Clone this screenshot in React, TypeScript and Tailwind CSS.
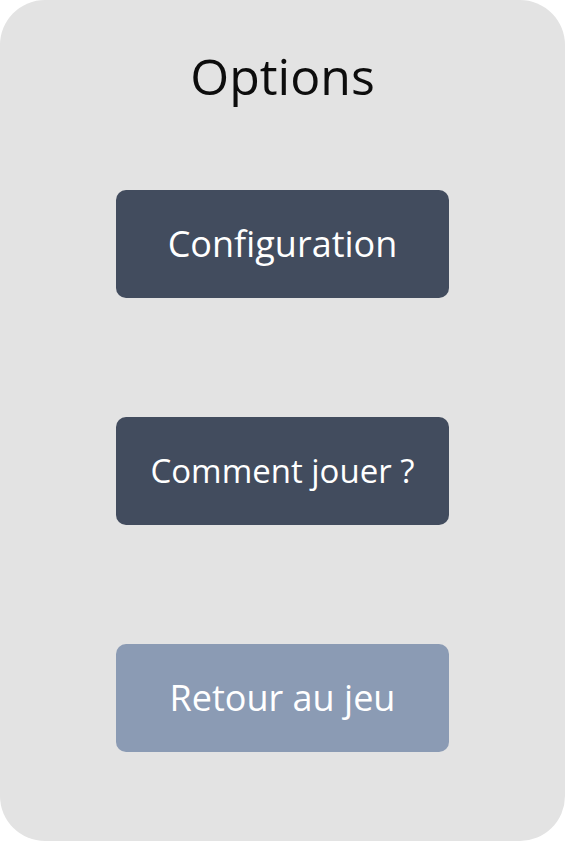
const BUTTONS = [
  { label: "Configuration", className: "bg-[#424c5e] text-[36px]" },
  { label: "Comment jouer ?", className: "bg-[#424c5e] text-[33px]" },
  { label: "Retour au jeu", className: "bg-[#8b9bb4] text-[36px]" },
];

export default function App() {
  return (
    <div className="w-[565px] h-[842px] bg-white">
      <div
        className="w-[565px] h-[841px] rounded-[45px] bg-[#e3e3e3] flex flex-col items-center pt-[44px]"
        style={{ fontFamily: '"Open Sans", sans-serif' }}
      >
        <h1 className="text-[50px] leading-[64px] text-[#0d0d0d]">Options</h1>

        <div className="mt-[82px] flex flex-col gap-[119px]">
          {BUTTONS.map((b) => (
            <button
              key={b.label}
              className={`w-[333px] h-[108px] rounded-[10px] flex items-center justify-center text-white ${b.className}`}
            >
              {b.label}
            </button>
          ))}
        </div>
      </div>
    </div>
  );
}
